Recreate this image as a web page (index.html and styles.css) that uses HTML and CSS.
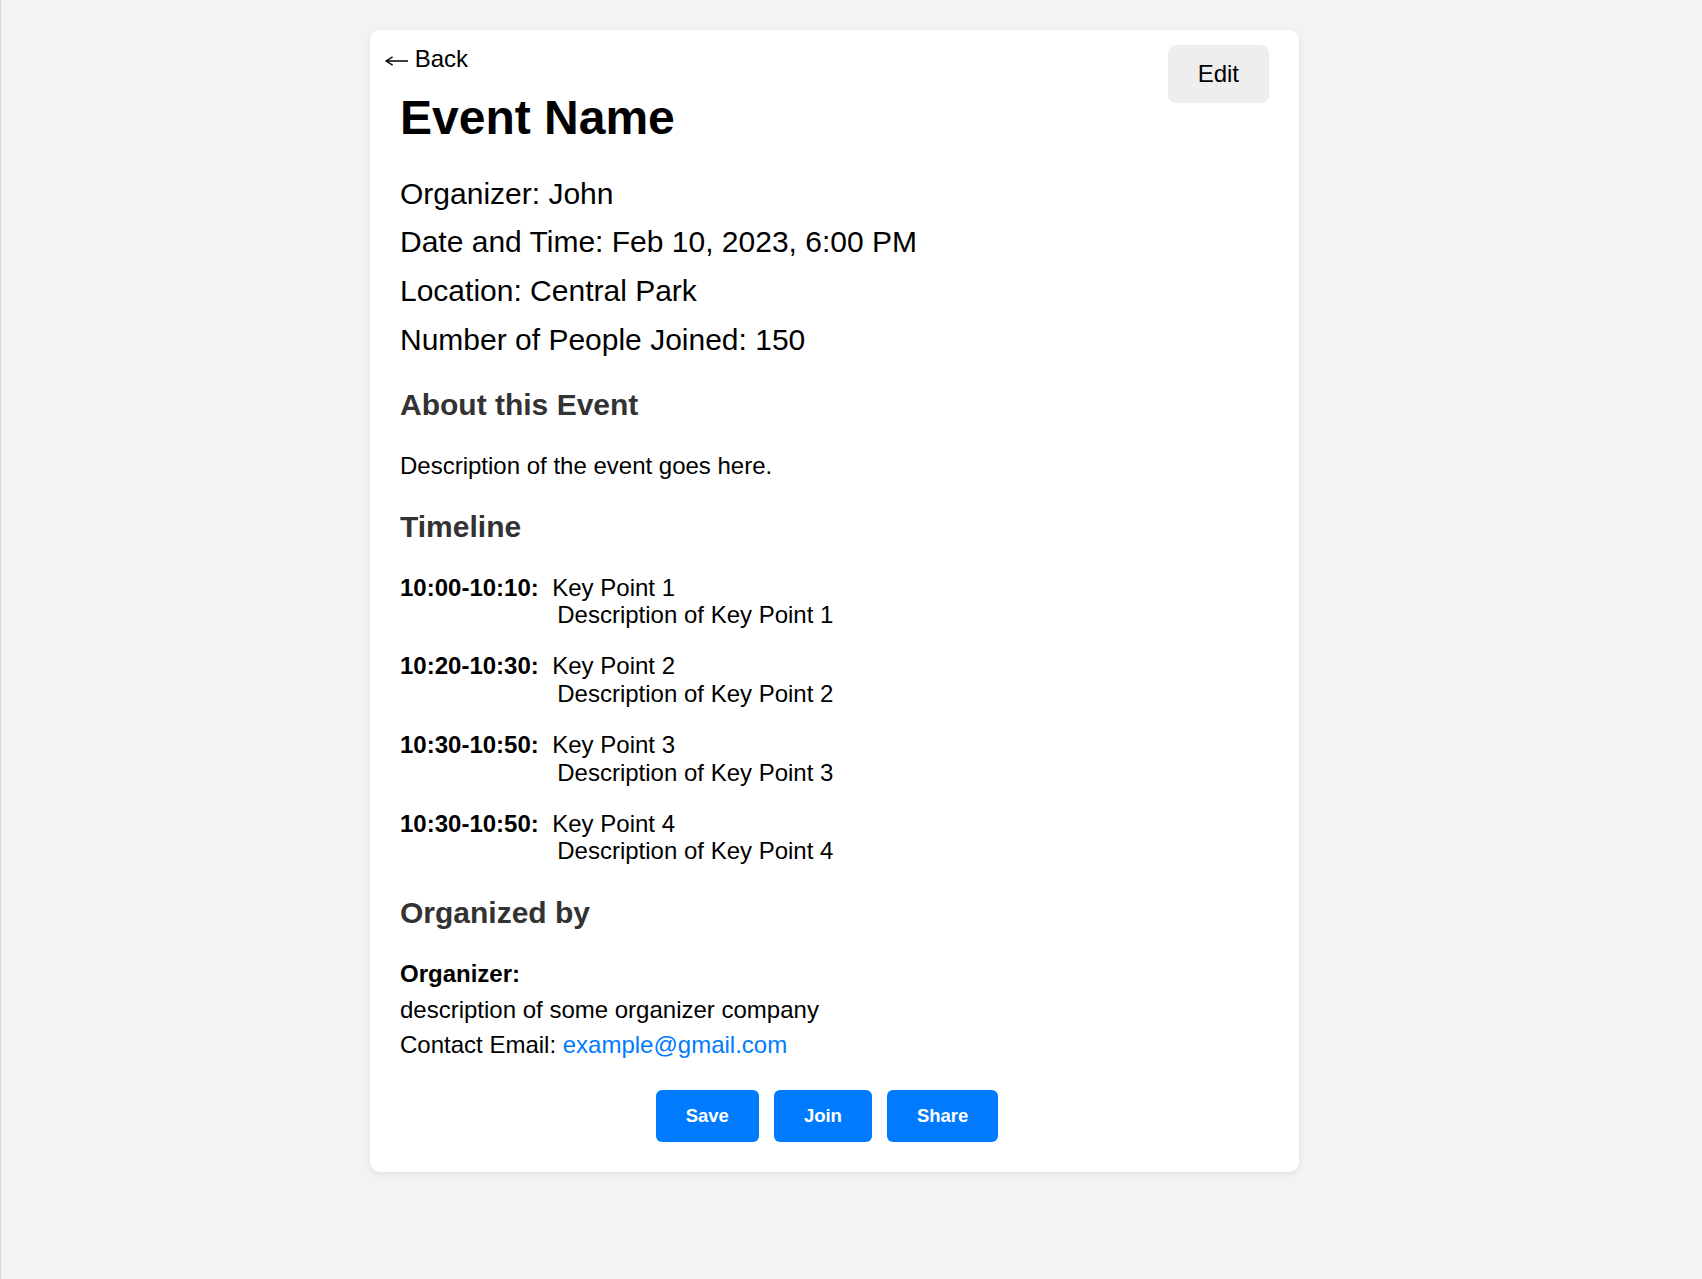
FILE: index.html
```html
<!DOCTYPE html>
<html lang="en">
<head>
<meta charset="utf-8">
<title>Event Name</title>
<link rel="stylesheet" href="styles.css">
</head>
<body>
<div class="page">
  <div class="card">
    <a class="back" href="#"><svg class="back-icon" width="24" height="12" viewBox="0 0 24 12" aria-hidden="true"><path d="M2 6H24M2 6L8.2 2.2M2 6L8.2 9.8" fill="none" stroke="#000" stroke-width="1.4" stroke-linecap="round"/></svg> Back</a>
    <button class="edit-btn" type="button">Edit</button>

    <h1 class="title">Event Name</h1>

    <div class="info">
      <p class="info-line">Organizer: John</p>
      <p class="info-line">Date and Time: Feb 10, 2023, 6:00 PM</p>
      <p class="info-line">Location: Central Park</p>
      <p class="info-line">Number of People Joined: 150</p>
    </div>

    <h2 class="section-title">About this Event</h2>
    <p class="description">Description of the event goes here.</p>

    <h2 class="section-title">Timeline</h2>
    <div class="timeline">
      <div class="tl-item">
        <strong class="tl-time">10:00-10:10:</strong>
        <div class="tl-body">
          <div class="tl-title">Key Point 1</div>
          <div class="tl-desc">Description of Key Point 1</div>
        </div>
      </div>
      <div class="tl-item">
        <strong class="tl-time">10:20-10:30:</strong>
        <div class="tl-body">
          <div class="tl-title">Key Point 2</div>
          <div class="tl-desc">Description of Key Point 2</div>
        </div>
      </div>
      <div class="tl-item">
        <strong class="tl-time">10:30-10:50:</strong>
        <div class="tl-body">
          <div class="tl-title">Key Point 3</div>
          <div class="tl-desc">Description of Key Point 3</div>
        </div>
      </div>
      <div class="tl-item">
        <strong class="tl-time">10:30-10:50:</strong>
        <div class="tl-body">
          <div class="tl-title">Key Point 4</div>
          <div class="tl-desc">Description of Key Point 4</div>
        </div>
      </div>
    </div>

    <h2 class="section-title">Organized by</h2>
    <div class="organizer">
      <div class="org-label">Organizer:</div>
      <div>description of some organizer company</div>
      <div>Contact Email: <a class="email" href="#">example@gmail.com</a></div>
    </div>

    <div class="actions">
      <button class="action-btn" type="button">Save</button>
      <button class="action-btn" type="button">Join</button>
      <button class="action-btn" type="button">Share</button>
    </div>
  </div>
</div>
</body>
</html>
```

FILE: styles.css
```css
html, body {
  margin: 0;
  padding: 0;
}

body {
  background: #f3f3f3;
  border-left: 1px solid #d9d9d9;
  min-height: 1279px;
  box-sizing: border-box;
  font-family: "Liberation Sans", Arial, sans-serif;
  color: #000;
}

.page {
  display: flex;
  justify-content: center;
  padding: 30px 34px 0 0;
}

.card {
  position: relative;
  width: 929px;
  box-sizing: border-box;
  padding: 30px;
  background: #fff;
  border-radius: 10px;
  box-shadow: 0 2px 6px rgba(0, 0, 0, 0.08);
}

.back {
  position: absolute;
  top: 15px;
  left: 14px;
  font-size: 24px;
  line-height: 27.6px;
  color: #000;
  text-decoration: none;
}

.back-icon {
  vertical-align: middle;
}

.edit-btn {
  position: absolute;
  top: 15px;
  right: 30px;
  padding: 15px 30px;
  border: none;
  border-radius: 8px;
  background: #eeeeee;
  font-family: "Liberation Sans", Arial, sans-serif;
  font-size: 24px;
  line-height: 27.6px;
  color: #000;
}

.title {
  margin: 30px 0 0;
  font-size: 48px;
  line-height: 56px;
  font-weight: bold;
}

.info {
  display: flex;
  flex-direction: column;
  gap: 16.8px;
  margin-top: 31.6px;
  padding-bottom: 1.8px;
}

.info-line {
  margin: 0;
  font-size: 30px;
  line-height: 32px;
}

.section-title {
  margin: 30px 0 0;
  font-size: 30px;
  line-height: 34px;
  font-weight: bold;
  color: #333;
}

.description {
  margin: 30px 0 0;
  font-size: 24px;
  line-height: 28px;
}

.timeline {
  display: flex;
  flex-direction: column;
  gap: 23.4px;
  margin-top: 30px;
  padding-bottom: 1px;
}

.tl-item {
  display: flex;
  font-size: 24px;
  line-height: 27.6px;
}

.tl-time {
  margin-right: 13.5px;
}

.tl-desc {
  padding-left: 5px;
}

.organizer {
  margin-top: 26.7px;
  font-size: 24px;
  line-height: 35.5px;
}

.org-label {
  font-weight: bold;
}

.email {
  color: #007bff;
  text-decoration: none;
}

.actions {
  display: flex;
  justify-content: center;
  margin-top: 27px;
}

.action-btn {
  margin-right: 15px;
  padding: 15px 30px;
  border: none;
  border-radius: 6px;
  background: #007bff;
  color: #fff;
  font-family: "Liberation Sans", Arial, sans-serif;
  font-size: 18.5px;
  line-height: 22.6px;
  font-weight: bold;
}
```
